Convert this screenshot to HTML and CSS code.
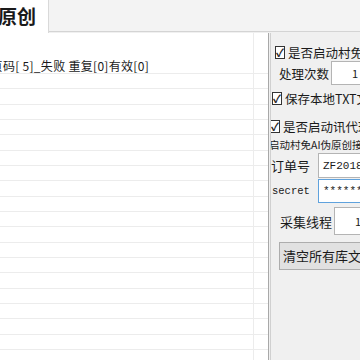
FILE: index.html
```html
<!DOCTYPE html>
<html lang="zh-CN">
<head>
    <meta charset="UTF-8">
    <title>伪原创</title>
    <link rel="stylesheet" href="styles.css">
</head>
<body>
    <div class="window">
        <div class="tabbar">
            <div class="tab">伪原创</div>
            <div class="tab-rest"></div>
        </div>
        <div class="main">
            <div class="list">
                <div class="row first"></div>
                <div class="row"><span class="cell">采集页码[ 5]_失败 重复[0]有效[0]</span></div>
                <div class="row"></div><div class="row"></div><div class="row"></div>
                <div class="row"></div><div class="row"></div><div class="row"></div>
                <div class="row"></div><div class="row"></div><div class="row"></div>
                <div class="row"></div><div class="row"></div><div class="row"></div>
                <div class="row"></div><div class="row"></div><div class="row"></div>
                <div class="row"></div><div class="row"></div><div class="row"></div>
                <div class="vline"></div>
            </div>
            <div class="panel">
                <label class="check c1"><span class="box">&#10003;</span>是否启动村免伪原创</label>
                <div class="field f1">
                    <span class="lbl">处理次数</span>
                    <span class="input center">1</span>
                </div>
                <label class="check c2"><span class="box">&#10003;</span>保存本地TXT文件</label>
                <label class="check c3"><span class="box">&#10003;</span>是否启动讯代理</label>
                <div class="note">启动村免AI伪原创接口</div>
                <div class="field f2">
                    <span class="lbl">订单号</span>
                    <span class="input mono">ZF20186123456</span>
                </div>
                <div class="field f3">
                    <span class="lbl small">secret</span>
                    <span class="input mono focus">****************</span>
                </div>
                <div class="field f4">
                    <span class="lbl">采集线程</span>
                    <span class="input center">1</span>
                </div>
                <div class="button">清空所有库文件</div>
            </div>
        </div>
    </div>
</body>
</html>
```

FILE: styles.css
```css
body { margin: 0; background: #f0f0f0; font-family: "Noto Sans CJK SC", sans-serif; color: #1a1a1a; }
.window { width: 360px; height: 360px; overflow: hidden; }

.tabbar { display: flex; height: 33px; }
.tab { width: 48px; background: #fff; font-size: 19px; font-weight: bold; line-height: 32px; text-indent: -21px; white-space: nowrap; overflow: hidden; border-right: 1px solid #d9d9d9; }
.tab-rest { flex: 1; background: #f3f3f3; border-bottom: 1px solid #d4d4d4; height: 31px; }

.main { display: flex; height: 327px; }
.list { position: relative; width: 268px; background: #fff; border-right: 1px solid #a8a8a8; overflow: hidden; }
.row { box-sizing: border-box; height: 15.33px; border-bottom: 1px solid #ececec; font-size: 12px; line-height: 14px; white-space: nowrap; }
.row.first { height: 25.7px; border-bottom: none; }
.cell { display: block; margin-left: -34px; letter-spacing: 0.3px; }
.vline { position: absolute; top: 0; bottom: 0; left: 253px; border-left: 1px solid #ececec; }

.panel { flex: 1; display: flex; flex-direction: column; border-left: 1px solid #d0d0d0; margin-left: 1px; background: #f0f0f0; font-size: 12.5px; white-space: nowrap; overflow: hidden; }

.check { display: flex; align-items: center; height: 16px; }
.box { box-sizing: border-box; width: 13px; height: 13px; border: 1px solid #333; background: #fff; font-size: 11px; line-height: 11px; text-align: center; margin-right: 3px; font-weight: bold; }
.c1 { margin: 11px 0 0 4px; }
.c2 { margin: 5px 0 0 1px; }
.c3 { margin: 12px 0 0 -1px; }
.note { font-size: 10.5px; margin: 4px 0 0 -2px; height: 14px; line-height: 14px; }

.field { display: flex; align-items: center; }
.lbl { flex: none; }
.input { flex: none; box-sizing: border-box; width: 120px; background: #fff; border: 1px solid #b4b4b4; font-size: 11px; display: flex; align-items: center; padding-left: 4px; }
.input.center { padding-left: 20px; }
.input.mono, .lbl.small { font-family: "Liberation Mono", monospace; }
.lbl.small { font-size: 10.5px; }
.input.focus { border-color: #5fa2dd; }

.f1 { margin: 1px 0 0 8px; }
.f1 .lbl { width: 52px; }
.f1 .input { height: 24px; }
.f2 { margin: 1px 0 0 0; }
.f2 .lbl { width: 47px; font-size: 13px; }
.f2 .input { height: 25px; }
.f3 { margin: 1px 0 0 1px; }
.f3 .lbl { width: 46px; }
.f3 .input { height: 24px; }
.f4 { margin: 4px 0 0 9px; }
.f4 .lbl { width: 54px; font-size: 13px; }
.f4 .input { height: 28px; }

.button { box-sizing: border-box; margin: 7px 0 0 8px; width: 120px; height: 28px; background: #e1e1e1; border: 1px solid #adadad; font-size: 13px; line-height: 26px; padding-left: 3px; }
```
